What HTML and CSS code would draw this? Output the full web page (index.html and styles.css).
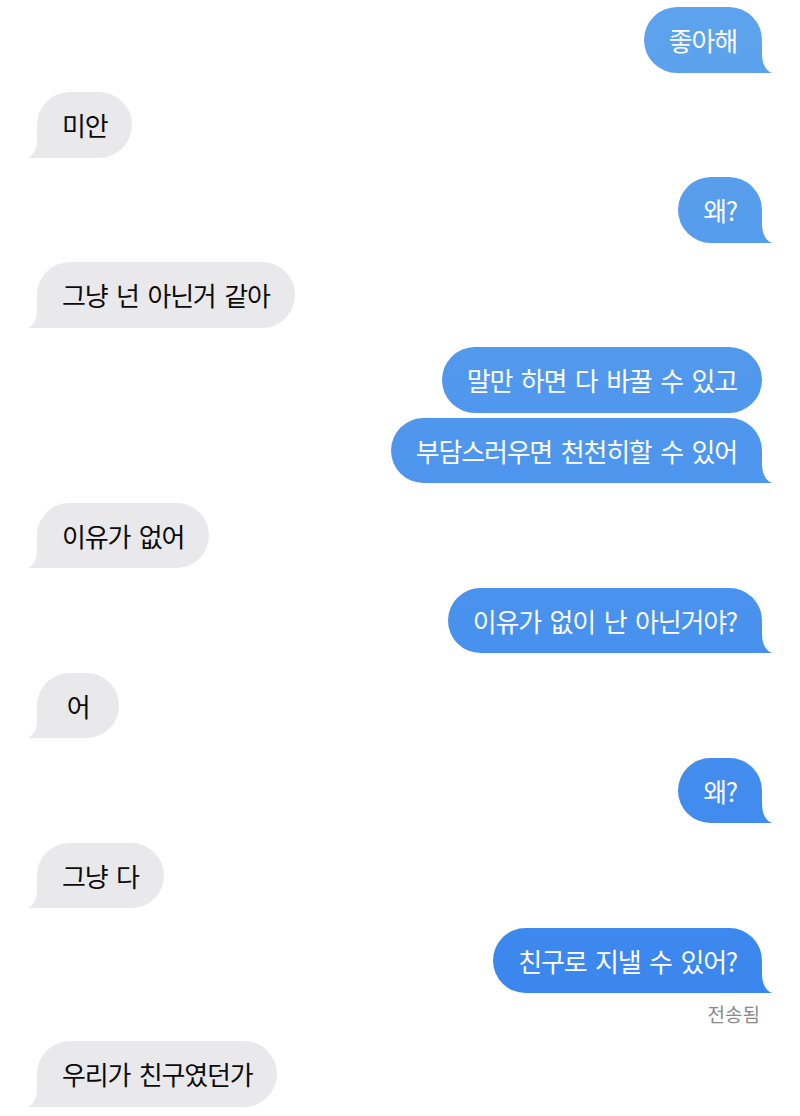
FILE: index.html
```html
<!DOCTYPE html>
<html>
<head>
  <title>메시지</title>
  <meta charset="utf-8">
  <link rel="stylesheet" href="styles.css">
</head>
<body>
  <div class="chat">
    <div class="msg sent tail first">좋아해</div>
    <div class="msg received tail">미안</div>
    <div class="msg sent tail">왜?</div>
    <div class="msg received tail">그냥 넌 아닌거 같아</div>
    <div class="msg sent">말만 하면 다 바꿀 수 있고</div>
    <div class="msg sent tail follow">부담스러우면 천천히할 수 있어</div>
    <div class="msg received tail">이유가 없어</div>
    <div class="msg sent tail">이유가 없이 난 아닌거야?</div>
    <div class="msg received tail">어</div>
    <div class="msg sent tail">왜?</div>
    <div class="msg received tail">그냥 다</div>
    <div class="msg sent tail">친구로 지낼 수 있어?</div>
    <div class="status">전송됨</div>
    <div class="msg received tail after-status">우리가 친구였던가</div>
  </div>
</body>
</html>
```

FILE: styles.css
```css
body {
  margin: 0;
  background: #fff;
  font-family: "Noto Sans CJK KR", sans-serif;
}

.chat {
  display: flex;
  flex-direction: column;
  padding: 7px 38px 0 37px;
}

.msg {
  position: relative;
  z-index: 0;
  box-sizing: border-box;
  height: 65.5px;
  min-width: 82px;
  margin-top: 19.5px;
  padding: 0 25px;
  border-radius: 33px;
  font-size: 26px;
  line-height: 65.5px;
  letter-spacing: -1.2px;
  word-spacing: 4px;
  text-align: center;
  white-space: nowrap;
}

.msg.first {
  margin-top: 0;
}

.msg.follow {
  margin-top: 5px;
}

.msg.after-status {
  margin-top: 14px;
}

/* blue bubbles share one fixed gradient, lighter at the top */
.sent {
  align-self: flex-end;
  color: #fff;
  background: linear-gradient(#5ea3ec, #3783ef) fixed;
}

.received {
  align-self: flex-start;
  color: #0b0b0b;
  background: #e9e9eb;
}

/* tail sits under the text, inside the bubble's stacking context */
.tail::before,
.tail::after {
  content: "";
  position: absolute;
  z-index: -1;
  bottom: 0;
  height: 30px;
}

.sent.tail::before {
  right: -10px;
  width: 43px;
  background: linear-gradient(#5ea3ec, #3783ef) fixed;
}

.sent.tail::after {
  right: -12px;
  width: 12px;
  background: #fff;
  border-bottom-left-radius: 12px 18px;
}

.received.tail::before {
  left: -9px;
  width: 42px;
  background: #e9e9eb;
}

.received.tail::after {
  left: -11px;
  width: 11px;
  background: #fff;
  border-bottom-right-radius: 11px 18px;
}

.status {
  align-self: flex-end;
  margin: 8px 2px 0 0;
  font-size: 19px;
  line-height: 26px;
  color: #8a8a8e;
}
```
